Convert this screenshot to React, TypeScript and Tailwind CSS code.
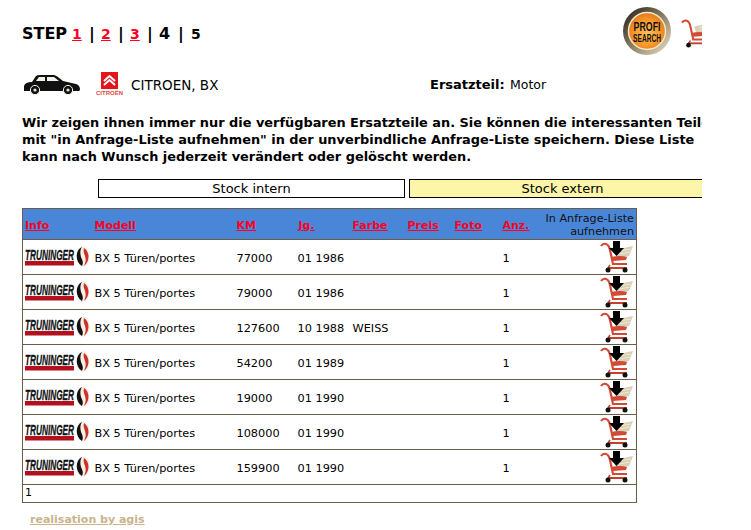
const rows = [
  { km: '77000', jg: '01 1986', farbe: '' },
  { km: '79000', jg: '01 1986', farbe: '' },
  { km: '127600', jg: '10 1988', farbe: 'WEISS' },
  { km: '54200', jg: '01 1989', farbe: '' },
  { km: '19000', jg: '01 1990', farbe: '' },
  { km: '108000', jg: '01 1990', farbe: '' },
  { km: '159900', jg: '01 1990', farbe: '' },
];

const headers = [
  { label: 'Info', cell: 'w-[69px] border-l pl-[2px]' },
  { label: 'Modell', cell: 'w-[142px] pl-[3px]' },
  { label: 'KM', cell: 'w-[61px] pl-[3px]' },
  { label: 'Jg.', cell: 'w-[55px] pl-[4px]' },
  { label: 'Farbe', cell: 'w-[55px] pl-[3px]' },
  { label: 'Preis', cell: 'w-[47px] pl-[3px]' },
  { label: 'Foto', cell: 'w-[48px] pl-[3px]' },
  { label: 'Anz.', cell: 'w-[40px] pl-[3px]' },
];

function CartIcon({ arrow = true, className = '' }: { arrow?: boolean; className?: string }) {
  return (
    <svg viewBox="0 0 34 32" className={className}>
      <path d="M14 9 L33 5 L29 15 L17 18 Z" fill="#d8cfb4" />
      <path d="M19 10 L31 8 M19 13 L30 11" stroke="#efe9d8" strokeWidth="1" />
      <path d="M1 5 Q3 2 6 3 Q9 4 10 9 L13 23 L27 23" fill="none" stroke="#d24a35" strokeWidth="2.2" />
      <path d="M11 16 Q20 14 27 16 L26 19 L13 20 Z" fill="#d24a35" />
      <path d="M8 27 L27 27" stroke="#c2402c" strokeWidth="2" />
      <path d="M10 24 L8 27" stroke="#c2402c" strokeWidth="1.5" />
      <circle cx="8" cy="29" r="2.5" fill="#111" />
      <circle cx="25" cy="29" r="2.5" fill="#111" />
      {arrow && <path d="M13 0 H20 V7 H24 L16.5 15 L9 7 H13 Z" fill="#000" />}
    </svg>
  );
}

function TruningerLogo() {
  return (
    <svg width="65" height="22" viewBox="0 0 65 22" className="block">
      <text transform="translate(0 14) scale(0.55 1)" fontFamily="'Liberation Sans', sans-serif" fontSize="15" fontWeight="700" fontStyle="italic" fill="#111" stroke="#111" strokeWidth="0.3">
        TRUNINGER
      </text>
      <rect x="0" y="15" width="49" height="4.5" fill="#b3101d" />
      <ellipse cx="58" cy="10.5" rx="6.6" ry="10.5" fill="#fbeee4" />
      <path d="M57 1 C50 4 50 16 57 20 C59 16 57 14 56 11 C55 7 55 4 57 1 Z" fill="#111" />
      <path d="M59 2 C65 6 65 15 59 20 C61 15 61 14 60 10 C59 7 58 5 59 2 Z" fill="#c8332a" />
    </svg>
  );
}

export default function App() {
  return (
    <div className="h-[530px] w-[751px] overflow-hidden bg-white font-['DejaVu_Sans',Verdana,sans-serif] text-black">
      <div className="h-[530px] w-[702px] overflow-hidden">
        {/* Kopf */}
        <div className="flex h-[66px] items-start justify-between pl-[22px]">
          <div className="mt-[25px] flex items-baseline text-[16px] font-bold leading-[18px] whitespace-nowrap">
            <span className="w-[50px]">STEP</span>
            <a className="w-[17px] text-[14px] text-[#ff0022] underline">1</a>
            <span className="w-[12px]">|</span>
            <a className="w-[17px] text-[14px] text-[#ff0022] underline">2</a>
            <span className="w-[12px]">|</span>
            <a className="w-[17px] text-[14px] text-[#ff0022] underline">3</a>
            <span className="w-[12px]">|</span>
            <span className="w-[19px]">4</span>
            <span className="w-[13px]">|</span>
            <span className="text-[14px]">5</span>
          </div>
          <div className="mt-[7px] flex items-start">
            <svg width="50" height="50" viewBox="0 0 50 50" className="mr-[8px]">
              <defs>
                <radialGradient id="orange" cx="50%" cy="55%" r="55%">
                  <stop offset="0%" stopColor="#ffc25a" />
                  <stop offset="60%" stopColor="#fb9a2c" />
                  <stop offset="100%" stopColor="#e4761a" />
                </radialGradient>
                <linearGradient id="ring" x1="0" y1="0" x2="1" y2="1">
                  <stop offset="0%" stopColor="#1c1a16" />
                  <stop offset="50%" stopColor="#8a7d62" />
                  <stop offset="100%" stopColor="#efe6cc" />
                </linearGradient>
              </defs>
              <circle cx="24" cy="24" r="24" fill="url(#ring)" />
              <circle cx="24" cy="24" r="18.5" fill="url(#orange)" stroke="#f3e7c9" strokeWidth="1.5" />
              <text transform="translate(24 24) scale(0.735 1)" textAnchor="middle" fontFamily="'Liberation Sans', sans-serif" fontSize="12" fontWeight="700" fill="#111">
                PROFI
              </text>
              <text transform="translate(24 35) scale(0.66 1)" textAnchor="middle" fontFamily="'Liberation Sans', sans-serif" fontSize="10" fontWeight="700" fill="#111">
                SEARCH
              </text>
            </svg>
            <CartIcon arrow={false} className="mt-[11px] h-[30px] w-[32px] shrink-0 -mr-[11px]" />
          </div>
        </div>

        {/* Fahrzeug */}
        <div className="flex h-[36px] items-center pl-[24px]">
          <svg width="56" height="22" viewBox="0 0 56 22" className="shrink-0">
            <path d="M0 13 Q1 9 8 9 L12 3 Q13 2 16 2 H30 Q32 2 39 8 L52 11 Q56 12 56 17 L55 18 H0 Z" fill="#111" />
            <path d="M12 8 L15 4 H21 V8 Z M23 8 V4 H30 L35 8 Z" fill="#f5f1e6" />
            <circle cx="11" cy="17" r="4.6" fill="#111" stroke="#f5f1e6" strokeWidth="1" />
            <circle cx="11" cy="17" r="1.6" fill="#e8e4d8" />
            <circle cx="44" cy="17" r="4.6" fill="#111" stroke="#f5f1e6" strokeWidth="1" />
            <circle cx="44" cy="17" r="1.6" fill="#e8e4d8" />
          </svg>
          <div className="ml-[16px] flex w-[27px] shrink-0 flex-col items-center">
            <svg width="17" height="17" viewBox="0 0 17 17" className="block">
              <rect width="17" height="17" fill="#e2141c" />
              <path d="M3 9 L8.5 4 L14 9 M3 13 L8.5 8 L14 13" fill="none" stroke="#fff" strokeWidth="2" />
            </svg>
            <span className="mt-[1px] whitespace-nowrap font-['Liberation_Sans',sans-serif] text-[6px] font-bold leading-[6px] text-[#e2483c]">CITROËN</span>
          </div>
          <span className="ml-[8px] mt-[2px] w-[299px] shrink-0 text-[13.5px] leading-[16px]">CITROEN, BX</span>
          <span className="mt-[2px] w-[80px] shrink-0 text-[13px] font-bold leading-[16px]">Ersatzteil:</span>
          <span className="mt-[2px] text-[12.5px] leading-[16px]">Motor</span>
        </div>

        {/* Hinweis */}
        <p className="mt-[12px] whitespace-nowrap pl-[22px] text-[12.9px] font-bold leading-[17px]">
          Wir zeigen ihnen immer nur die verfügbaren Ersatzteile an. Sie können die interessanten Teile
          <br />
          mit "in Anfrage-Liste aufnehmen" in der unverbindliche Anfrage-Liste speichern. Diese Liste
          <br />
          kann nach Wunsch jederzeit verändert oder gelöscht werden.
        </p>

        {/* Stock */}
        <div className="mt-[14px] flex w-[800px] gap-[4px] pl-[98px]">
          <div className="h-[19px] w-[307px] border border-black bg-white text-center text-[13px] leading-[18px]">Stock intern</div>
          <div className="h-[19px] w-[307px] border border-black bg-[#fdf6a8] text-center text-[13px] leading-[18px]">Stock extern</div>
        </div>

        {/* Ergebnisse */}
        <table className="ml-[22px] mt-[10px] w-[615px] table-fixed border-collapse text-[11.3px]">
          <thead>
            <tr className="h-[31px] bg-[#4a86d8]">
              {headers.map((h) => (
                <th key={h.label} className={`${h.cell} border-y border-[#6b5d4a] p-0 pt-[5px] text-left text-[11px] font-bold`}>
                  <a className="text-[#ff0022] underline">{h.label}</a>
                </th>
              ))}
              <th className="border-y border-r border-[#6b5d4a] p-0 pr-[2px] pt-[1px] text-right text-[11.2px] font-normal leading-[13px] text-[#111] whitespace-nowrap">
                In Anfrage-Liste
                <br />
                aufnehmen
              </th>
            </tr>
          </thead>
          <tbody>
            {rows.map((row) => (
              <tr key={row.km} className="h-[35px]">
                <td className="border-y border-l border-[#6b5d4a] p-0 pl-[2px]">
                  <TruningerLogo />
                </td>
                <td className="border-y border-[#6b5d4a] p-0 pl-[3px] pt-[5px] whitespace-nowrap">BX 5 Türen/portes</td>
                <td className="border-y border-[#6b5d4a] p-0 pl-[3px] pt-[5px]">{row.km}</td>
                <td className="border-y border-[#6b5d4a] p-0 pl-[3px] pt-[5px]">{row.jg}</td>
                <td className="border-y border-[#6b5d4a] p-0 pl-[3px] pt-[5px]">{row.farbe}</td>
                <td className="border-y border-[#6b5d4a] p-0" />
                <td className="border-y border-[#6b5d4a] p-0" />
                <td className="border-y border-[#6b5d4a] p-0 pl-[3px] pt-[5px]">1</td>
                <td className="border-y border-r border-[#6b5d4a] p-0 pr-[2px]">
                  <CartIcon className="ml-auto block h-[32px] w-[34px]" />
                </td>
              </tr>
            ))}
            <tr className="h-[18px]">
              <td colSpan={9} className="border border-[#6b5d4a] p-0 pl-[2px] text-[11px]">1</td>
            </tr>
          </tbody>
        </table>

        <a className="ml-[30px] mt-[10px] block w-max text-[11px] font-bold leading-[14px] text-[#c8b48c] underline">realisation by agis</a>
      </div>
    </div>
  );
}
